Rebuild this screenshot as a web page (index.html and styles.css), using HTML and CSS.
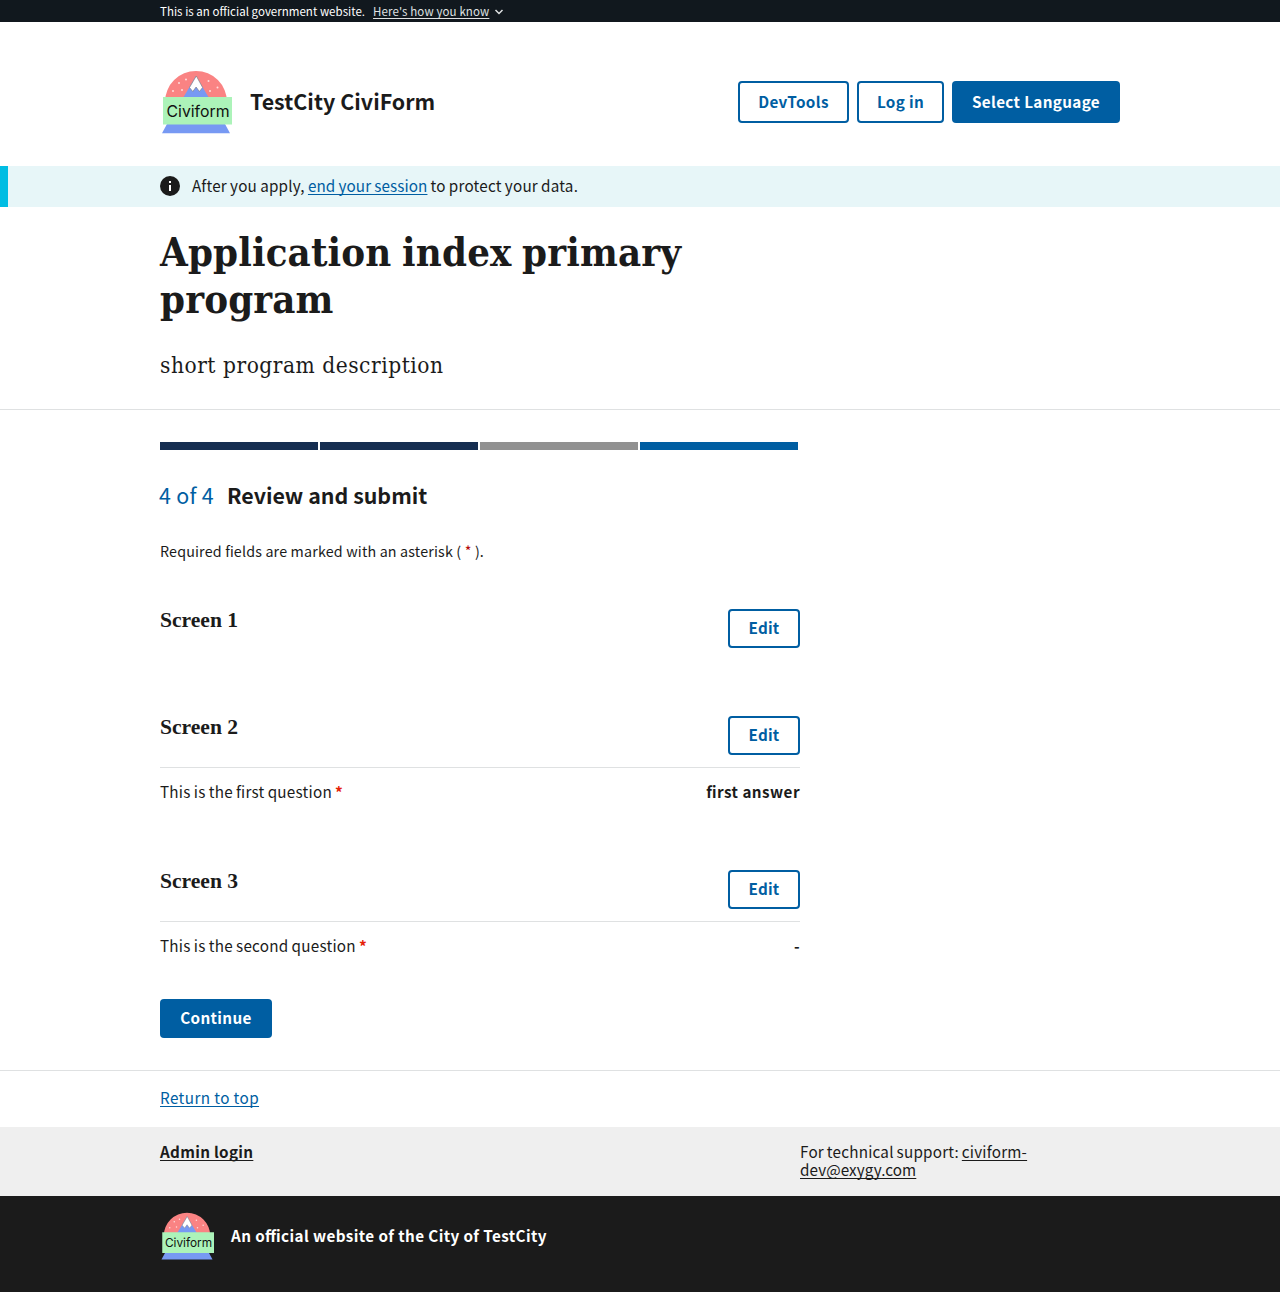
FILE: index.html
```html
<!DOCTYPE html>
<html lang="en">
<head>
<meta charset="utf-8">
<title>Application index primary program</title>
<link rel="stylesheet" href="styles.css">
</head>
<body>
<div class="banner"><div class="container">
  <span class="banner-text">This is an official government website.</span>
  <a class="banner-link" href="#">Here's how you know</a>
  <svg class="chevron" viewBox="0 0 10 10"><path d="m1.500 3 3.500 3.500L8.500 3" fill="none" stroke="#dfe1e2" stroke-width="1.500"/></svg>
</div></div>
<header class="header"><div class="container">
  <svg class="logo" viewBox="0 0 72 72">
    <g id="globe">
      <path d="M5 32a31 31 0 0 1 62 0z" fill="#fa8383"/>
      <g fill="#fdd"><circle cx="19" cy="13" r="1"/><circle cx="26" cy="9.500" r="1"/><circle cx="13" cy="21" r="1"/><circle cx="22" cy="20" r="1"/><circle cx="48.500" cy="11" r="1"/><circle cx="57.500" cy="17.500" r="1"/><circle cx="50" cy="21" r="1"/></g>
      <path d="M36 6 23 28h26z" fill="#7799f3"/>
      <path d="M36.300 6 29.500 17.500l3.300 4 3.300-4.500 3.300 4.500 3.200-4z" fill="#fff" stroke="#777" stroke-width=".6"/>
      <path d="M7 54h58l5 9.300H2z" fill="#7799f3"/>
      <path d="M3 27h69v27.500H3z" fill="#acf3b9"/>
    </g>
    <text x="6.500" y="47.300" textLength="63" lengthAdjust="spacingAndGlyphs" class="logo-text">Civiform</text>
  </svg>
  <span class="brand">TestCity CiviForm</span>
  <nav class="nav">
    <button class="btn outline dev">DevTools</button>
    <button class="btn outline login">Log in</button>
    <button class="btn lang">Select Language</button>
  </nav>
</div></header>
<div class="alert"><div class="container">
  <svg class="info" viewBox="0 0 20 20"><circle cx="10" cy="10" r="10" fill="#1b1b1b"/><path d="M9 5h2v2H9zM9 9h2v6H9z" fill="#fff"/></svg>
  <p class="alert-text">After you apply, <a href="#">end your session</a> to protect your data.</p>
</div></div>
<section class="intro"><div class="container">
  <h1>Application index primary<br>program</h1>
  <p class="description">short program description</p>
</div></section>
<main class="main"><div class="content">
  <div class="steps"><i class="done"></i><i class="done"></i><i class="skipped"></i><i class="current"></i></div>
  <h2 class="step-title"><span class="count">4 of 4</span><span class="step-name">Review and submit</span></h2>
  <p class="required">Required fields are marked with an asterisk ( <b>*</b> ).</p>
  <section class="screen"><div class="screen-head"><h3>Screen 1</h3><button class="btn outline edit">Edit</button></div></section>
  <section class="screen"><div class="screen-head"><h3>Screen 2</h3><button class="btn outline edit">Edit</button></div>
    <div class="answer"><span>This is the first question <b>*</b></span><strong>first answer</strong></div></section>
  <section class="screen"><div class="screen-head"><h3>Screen 3</h3><button class="btn outline edit">Edit</button></div>
    <div class="answer"><span>This is the second question <b>*</b></span><strong>-</strong></div></section>
  <button class="btn continue">Continue</button>
</div></main>
<div class="return"><div class="container"><a href="#">Return to top</a></div></div>
<footer>
  <div class="support"><div class="container">
    <div class="admin"><a href="#">Admin login</a></div>
    <p class="contact">For technical support: <a href="#">civiform-<br><span class="domain">dev@exygy.com</span></a></p>
  </div></div>
  <div class="identifier"><div class="container">
    <svg class="small-logo" viewBox="0 0 72 72">
      <use href="#globe"/>
      <text x="6.500" y="47.300" textLength="63" lengthAdjust="spacingAndGlyphs" class="logo-text">Civiform</text>
    </svg>
    <span class="official">An official website of the City of TestCity</span>
  </div></div>
</footer>
</body>
</html>
```
FILE: styles.css
```css
* { box-sizing: border-box; }
body {
  margin: 0;
  background: #fff;
  color: #1b1b1b;
  font-family: "Noto Sans CJK SC", "Open Sans", sans-serif;
  font-size: 15.250px;
  line-height: 18px;
  font-feature-settings: "liga" 1;
}
h1, h2, h3, p { margin: 0; }
a { color: #005ea2; text-underline-offset: 2px; text-decoration-thickness: 1px; text-decoration-skip-ink: none; }
.container { width: 960px; margin: 0 auto; display: flex; align-items: center; }
.logo-text { font-family: Inter, sans-serif; font-size: 16px; fill: #111; }

.banner { height: 22px; background: #11181e; color: #fff; font-size: 11.500px; }
.banner .container { height: 22px; }
.banner-text { letter-spacing: 0.030px; }
.banner-link { color: #dfe1e2; margin-left: 8px; letter-spacing: 0.120px; }
.chevron { width: 10px; height: 10px; margin-left: 5px; margin-top: 2px; }

.header .container { height: 144px; padding-top: 16px; }
.logo { width: 72px; height: 72px; margin-top: 8px; }
.brand { margin-left: 18px; margin-bottom: 2px; font-size: 21.400px; font-weight: 700; line-height: 28px; letter-spacing: 0.040px; }
.nav { margin-left: auto; display: flex; gap: 8px; }
.btn {
  height: 42px;
  padding: 0 0 2px;
  border: 0;
  border-radius: 4px;
  background: #005ea2;
  color: #fff;
  font: 700 15.250px/18px "Noto Sans CJK SC", "Open Sans", sans-serif;
  letter-spacing: 0.350px;
}
.outline { background: #fff; color: #005ea2; border: 2px solid #005ea2; }
.dev { width: 111px; }
.login { width: 87px; }
.lang { width: 168px; }

.alert { height: 41px; background: #e7f6f8; border-left: 8px solid #00bde3; padding-right: 8px; }
.alert .container { height: 40px; letter-spacing: 0.200px; word-spacing: -0.500px; }
.alert-text { margin-bottom: 2px; }
.alert-text a { letter-spacing: 0.100px; }
.info { width: 20px; height: 20px; margin-right: 12px; }

.intro { height: 203px; padding-top: 22px; border-bottom: 1px solid #dfe1e2; }
.intro .container { flex-direction: column; align-items: flex-start; gap: 26px; }
h1, .description { font-family: "DejaVu Serif Condensed", "DejaVu Serif", serif; }
h1 { font-size: 39.750px; line-height: 47px; letter-spacing: 0.150px; word-spacing: -2px; }
.description { font-size: 22.500px; line-height: 32px; letter-spacing: 0.520px; }

.main { height: 661px; padding-top: 32px; border-bottom: 1px solid #dfe1e2; }
.content { width: 640px; margin-left: 160px; }
.steps { display: grid; grid-template-columns: repeat(4, 158px); gap: 2px; }
.steps i { height: 8px; }
.done { background: #162e51; }
.skipped { background: #919191; }
.current { background: #005ea2; }
.step-title { display: flex; align-items: center; margin-top: 31px; font-size: 21.400px; line-height: 28px; }
.count { width: 68px; margin-left: -1px; color: #005ea2; font-weight: 400; letter-spacing: 0.300px; }
.required { margin-top: 32px; font-size: 14.300px; line-height: 20px; letter-spacing: 0.160px; }
.required b { color: #b50909; font-weight: 400; }
.screen { margin-bottom: 68px; }
.required + .screen { margin-top: 48px; }
.screen-head { display: flex; justify-content: space-between; height: 39px; }
h3 { font: 700 21.600px/22px "Liberation Serif", serif; }
.edit { width: 72px; height: 39px; padding-bottom: 3px; letter-spacing: 0.200px; }
.answer { display: flex; justify-content: space-between; height: 35px; margin-top: 12px; padding-top: 14px; border-top: 1px solid #dfe1e2; letter-spacing: 0.230px; word-spacing: -0.500px; }
.answer b { color: #e52207; }
.answer strong { letter-spacing: 0.450px; word-spacing: 0; }
.screen:last-of-type { margin-bottom: 43px; }
.continue { display: block; width: 112px; height: 39px; padding-bottom: 3px; }

.return .container { height: 56px; padding-bottom: 4px; letter-spacing: 0.400px; }
.support { height: 69px; background: #efefef; padding-top: 15px; }
.support .container { align-items: flex-start; }
.support a { color: #1b1b1b; }
.admin { width: 640px; font-weight: 700; letter-spacing: 0.300px; }
.contact { letter-spacing: 0.200px; word-spacing: -0.700px; }
.domain { letter-spacing: 0.080px; }
.identifier { height: 96px; background: #1b1b1b; color: #fff; }
.identifier .container { height: 80px; }
.small-logo { width: 54px; height: 54px; margin-top: 6px; }
.official { margin: 0 0 2px 17px; font-weight: 700; letter-spacing: 0.390px; }
```
